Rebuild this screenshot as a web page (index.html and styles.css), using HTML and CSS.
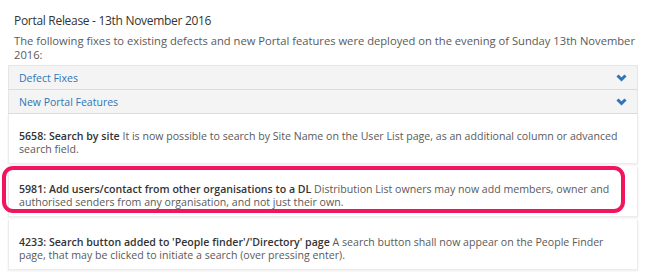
FILE: index.html
```html
<!DOCTYPE html>
<html lang="en">
<head>
  <meta charset="UTF-8">
  <title>Portal Release - 13th November 2016</title>
  <link rel="stylesheet" href="styles.css">
</head>
<body>
  <div class="release">
    <h3 class="release-title">Portal Release - 13th November 2016</h3>
    <p class="release-intro">The following fixes to existing defects and new Portal features were deployed on the evening of Sunday 13th November 2016:</p>

    <div class="accordion">
      <div class="acc-head">
        <a href="#">Defect Fixes</a>
        <svg class="chev" width="11" height="8" viewBox="0 0 11 8"><polyline points="1.5,1.5 5.5,5.5 9.5,1.5" fill="none" stroke="#2f74b8" stroke-width="3"/></svg>
      </div>
      <div class="acc-head">
        <a href="#">New Portal Features</a>
        <svg class="chev" width="11" height="8" viewBox="0 0 11 8"><polyline points="1.5,1.5 5.5,5.5 9.5,1.5" fill="none" stroke="#2f74b8" stroke-width="3"/></svg>
      </div>

      <div class="acc-body">
        <div class="item">
          <b>5658: Search by site</b> It is now possible to search by Site Name on the User List page, as an additional column or advanced search field.
        </div>
        <div class="item highlighted">
          <b>5981: Add users/contact from other organisations to a DL</b> Distribution List owners may now add members, owner and authorised senders from any organisation, and not just their own.
          <span class="marker"></span>
        </div>
        <div class="item">
          <b>4233: Search button added to 'People finder'/'Directory' page</b> A search button shall now appear on the People Finder page, that may be clicked to initiate a search (over pressing enter).
        </div>
      </div>
    </div>
  </div>
</body>
</html>
```

FILE: styles.css
```css
html, body {
  margin: 0;
  padding: 0;
  background: #fff;
  font-family: 'Segoe UI', 'Open Sans', sans-serif;
  color: #555;
}

.release {
  padding: 12px 10px 0 8px;
}

.release-title {
  margin: 0 0 4px 6px;
  font-size: 12px;
  font-weight: normal;
  letter-spacing: -0.3px;
  color: #333;
  line-height: 18px;
}

.release-intro {
  margin: 0 0 3px 6px;
  font-size: 11.2px;
  line-height: 14px;
  color: #5a5a5a;
}

.acc-head {
  display: flex;
  justify-content: space-between;
  align-items: center;
  height: 23px;
  padding: 0 10px 0 10px;
  background: #f4f4f4;
  border: 1px solid #e6e6e6;
  border-bottom: none;
}

.acc-head + .acc-head {
  border-top: 1px solid #dcdcdc;
}

.acc-head a {
  color: #2f74b8;
  font-size: 10.5px;
  text-decoration: none;
}

.acc-body {
  border-top: 1px solid #dcdcdc;
}

.item {
  position: relative;
  padding: 16px 10px 8px 10px;
  margin-bottom: 3px;
  font-size: 10.6px;
  line-height: 12.5px;
  color: #5a5a5a;
  background: #fff;
  border: 1px solid #ececec;
  border-top: none;
  box-shadow: 0 1px 2px rgba(0, 0, 0, 0.08);
}

.item b {
  color: #333;
  font-weight: 600;
}

.marker {
  position: absolute;
  left: -7px;
  right: 12px;
  top: -1px;
  bottom: 3px;
  border: 4px solid #f2145c;
  border-radius: 11px;
  pointer-events: none;
}
```
